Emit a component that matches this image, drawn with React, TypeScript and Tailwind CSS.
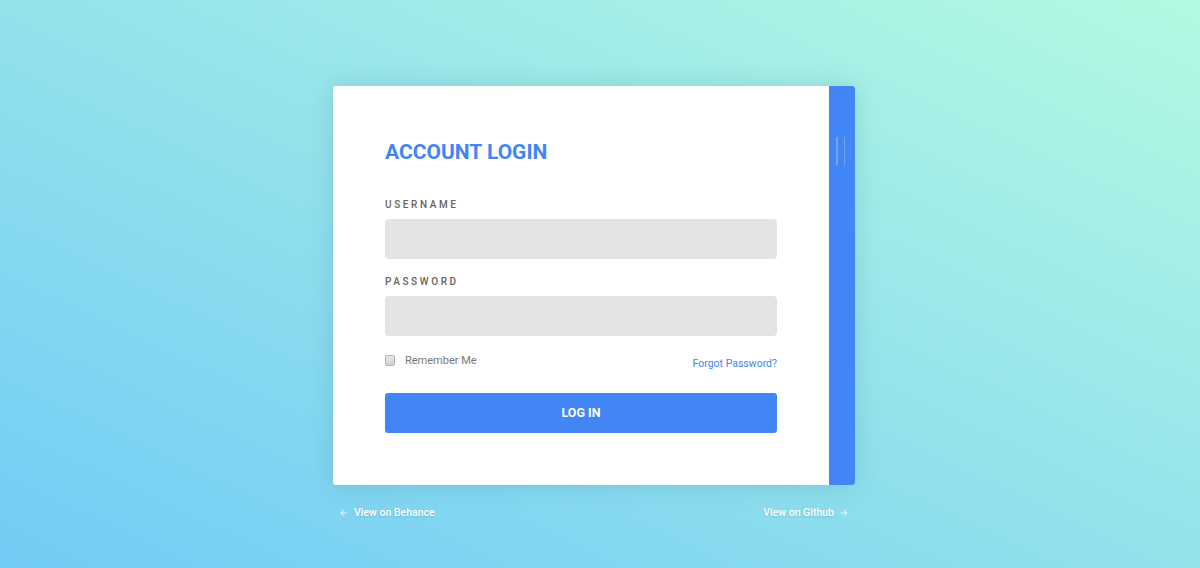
import { ArrowLeft, ArrowRight } from 'lucide-react';

function App() {
  return (
    <div className="w-full h-[568px] overflow-hidden bg-[linear-gradient(to_top_right,#72cbf5,#b3fae2)] font-['Roboto',sans-serif]">
      <div className="flex justify-center pt-[86px] pr-[12px]">
        <div className="w-[522px]">
          <div className="flex h-[399px] rounded-[3px] bg-white shadow-[0_0_24px_rgba(40,90,120,0.18)]">
            <div className="flex-1 px-[52px] pt-[53px]">
              <h1 className="text-[21px] leading-[26px] font-bold text-[#4285f4]">ACCOUNT LOGIN</h1>

              <label className="block mt-[34px] mb-[9px] text-[10px] leading-[11px] font-medium tracking-[2.6px] text-[#6b625a]">
                USERNAME
              </label>
              <input type="text" className="block w-full h-[40px] rounded-[4px] bg-[#e4e4e4] outline-none px-3" />

              <label className="block mt-[17px] mb-[9px] text-[10px] leading-[11px] font-medium tracking-[2.6px] text-[#6b625a]">
                PASSWORD
              </label>
              <input type="password" className="block w-full h-[40px] rounded-[4px] bg-[#e4e4e4] outline-none px-3" />

              <div className="flex items-start justify-between mt-[17px] h-[16px]">
                <label className="flex items-center gap-[10px] text-[11px] leading-[16px] text-[#777]">
                  <input
                    type="checkbox"
                    className="appearance-none w-[10px] h-[11px] -mt-[2px] rounded-[2px] border border-[#b5b5b5] bg-[linear-gradient(#e8e8e8,#d2d2d2)]"
                  />
                  Remember Me
                </label>
                <a href="#" className="mt-[3px] text-[10.5px] leading-[16px] text-[#4285f4]">Forgot Password?</a>
              </div>

              <button className="mt-[24px] w-full h-[40px] rounded-[3px] bg-[#4285f4] text-white text-[12.5px] font-bold">
                LOG IN
              </button>
            </div>
            <div className="w-[26px] rounded-r-[3px] bg-[#4285f4] pt-[51px] flex gap-[6px] pl-[7px]">
              <span className="block w-[1.5px] h-[28px] bg-white/25" />
              <span className="block w-[1.5px] h-[28px] bg-white/25" />
            </div>
          </div>

          <div className="flex justify-between mt-[21px] px-[6px] text-[10.5px] leading-[14px] font-medium text-white [text-shadow:0_1px_2px_rgba(0,0,0,0.15)]">
            <a href="#" className="flex items-center gap-[5px]">
              <ArrowLeft size={10} strokeWidth={2} />
              View on Behance
            </a>
            <a href="#" className="flex items-center gap-[5px]">
              View on Github
              <ArrowRight size={10} strokeWidth={2} />
            </a>
          </div>
        </div>
      </div>
    </div>
  );
}

export default App;
